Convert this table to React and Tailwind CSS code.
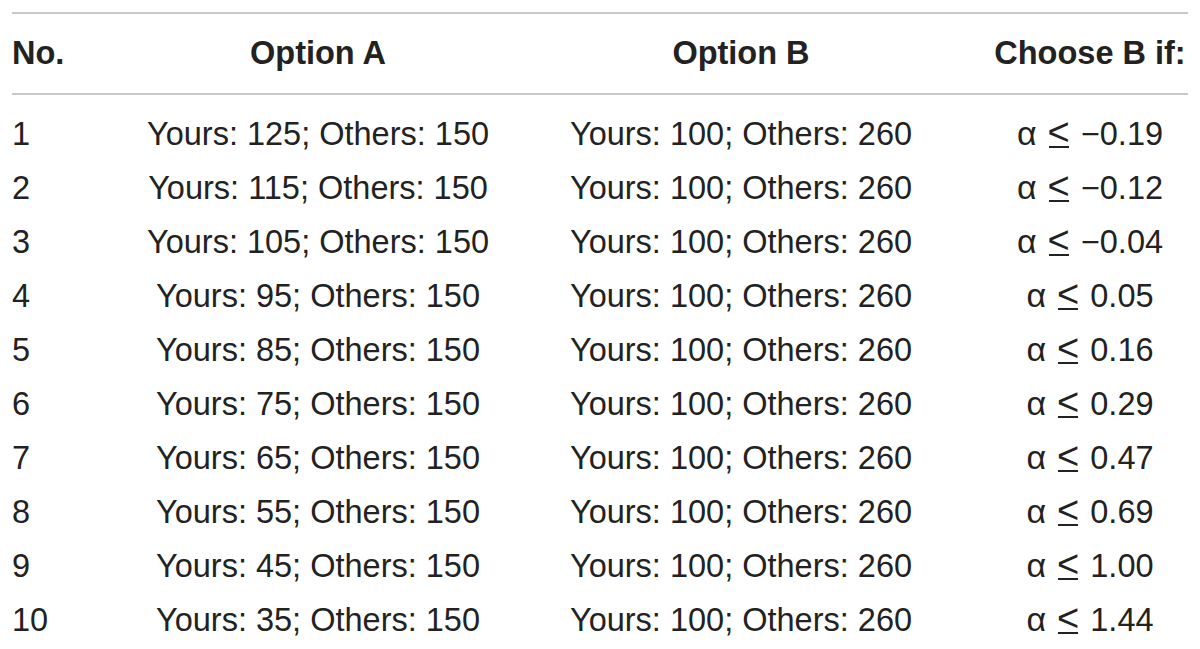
const ROWS = [
  { no: 1, a: 'Yours: 125; Others: 150', b: 'Yours: 100; Others: 260', cond: '\u22120.19' },
  { no: 2, a: 'Yours: 115; Others: 150', b: 'Yours: 100; Others: 260', cond: '\u22120.12' },
  { no: 3, a: 'Yours: 105; Others: 150', b: 'Yours: 100; Others: 260', cond: '\u22120.04' },
  { no: 4, a: 'Yours: 95; Others: 150', b: 'Yours: 100; Others: 260', cond: '0.05' },
  { no: 5, a: 'Yours: 85; Others: 150', b: 'Yours: 100; Others: 260', cond: '0.16' },
  { no: 6, a: 'Yours: 75; Others: 150', b: 'Yours: 100; Others: 260', cond: '0.29' },
  { no: 7, a: 'Yours: 65; Others: 150', b: 'Yours: 100; Others: 260', cond: '0.47' },
  { no: 8, a: 'Yours: 55; Others: 150', b: 'Yours: 100; Others: 260', cond: '0.69' },
  { no: 9, a: 'Yours: 45; Others: 150', b: 'Yours: 100; Others: 260', cond: '1.00' },
  { no: 10, a: 'Yours: 35; Others: 150', b: 'Yours: 100; Others: 260', cond: '1.44' },
];

const GRID = 'grid grid-cols-[135px_342px_504px_194px]';

function Cell({ children, left }) {
  return (
    <div className={`flex items-center whitespace-nowrap ${left ? 'justify-start' : 'justify-center'}`}>
      {children}
    </div>
  );
}

// "less than or equal" drawn as < with a bar under it, like the typeset original
function Leq() {
  return (
    <span className="mx-[11px] inline-flex flex-col items-center">
      <span className="text-[38px] leading-none">&lt;</span>
      <span className="mt-[-5px] h-[2px] w-[20px] bg-[#222222]" />
    </span>
  );
}

export default function App() {
  return (
    <div
      className="w-[1200px] h-[649px] overflow-hidden bg-white px-[12px] pt-[12px] text-[#222222] text-[32.5px] leading-none"
      style={{ fontFamily: '"Liberation Sans", Arial, sans-serif' }}
    >
      <div className="h-[2px] bg-[#c9c9c9]" />
      <div className={`${GRID} h-[79px] font-bold`}>
        <Cell left>No.</Cell>
        <Cell>Option A</Cell>
        <Cell>Option B</Cell>
        <Cell>Choose B if:</Cell>
      </div>
      <div className="h-[2px] bg-[#c9c9c9]" />
      <div className="pt-[12px]">
        {ROWS.map((row) => (
          <div key={row.no} className={`${GRID} h-[54px]`}>
            <Cell left>{row.no}</Cell>
            <Cell>{row.a}</Cell>
            <Cell>{row.b}</Cell>
            <Cell>
              <span className="mb-[4px] leading-none">
                <span className="text-[34px]">α</span>
                <Leq />
                {row.cond}
              </span>
            </Cell>
          </div>
        ))}
      </div>
    </div>
  );
}
